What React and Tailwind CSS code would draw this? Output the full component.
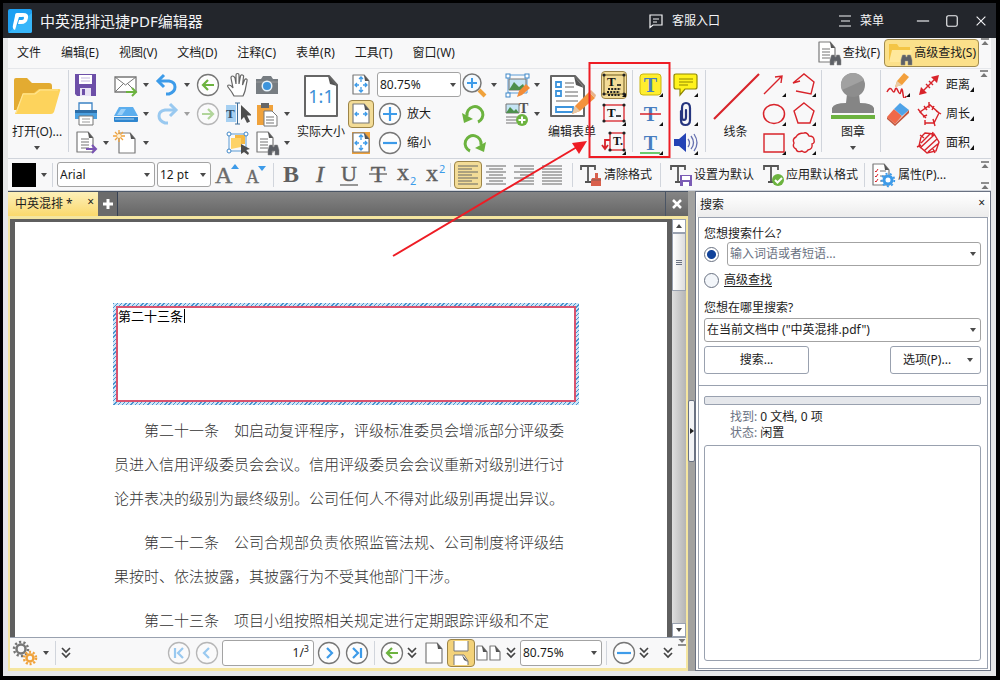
import React, { useState } from "react";
import clsx from "clsx";

const RED = "#d8232a";
const BLUE = "#3d9be9";
const GREEN = "#6cb33f";
const GRAY = "#6b6b6b";

/* ---------- helpers ---------- */

function Svg({ children, box = 26, className = "size-[26px]" }) {
  return (
    <svg viewBox={`0 0 ${box} ${box}`} className={clsx("shrink-0", className)} fill="none" aria-hidden="true">
      {children}
    </svg>
  );
}

function Caret({ className }) {
  return (
    <svg viewBox="0 0 8 4" className={clsx("h-1 w-2 shrink-0", className)} aria-hidden="true">
      <path d="M1 0h6L4 4z" fill="#4a4a4a" />
    </svg>
  );
}

function Corner() {
  return <path d="M25 21v4h-4z" fill="#111" />;
}

function Sep({ className }) {
  return <span className={clsx("w-px shrink-0 bg-gray-300", className)} />;
}

function Cell({ label, icon, caret, active, faded, text }) {
  return (
    <button type="button" aria-label={text ? undefined : label} className="flex h-[29px] shrink-0 items-center">
      <span
        className={clsx(
          "flex h-7 w-[26px] shrink-0 items-center justify-center",
          active && "rounded-sm border border-[#9c8448] bg-[#f3dc97]",
          faded && "opacity-50"
        )}
      >
        {icon}
      </span>
      {caret && (
        <span className={clsx("flex w-[14px] justify-center", faded && "opacity-50")}>
          <Caret />
        </span>
      )}
      {text && <span className="pl-1">{text}</span>}
    </button>
  );
}

function Select({ label, options, className, placeholder }) {
  return (
    <span className={clsx("relative flex items-center", className)}>
      <select
        aria-label={label}
        className={clsx(
          "size-full appearance-none rounded-[3px] border border-[#a3a3a3] bg-white pl-[2px] outline-none",
          placeholder && "text-gray-500"
        )}
      >
        {options.map((o) => (
          <option key={o}>{o}</option>
        ))}
      </select>
      <Caret className="pointer-events-none absolute right-1" />
    </span>
  );
}

/* up / down overflow marks at the end of a bar */
function Overflow({ down, className }) {
  return (
    <svg viewBox="0 0 8 7" className={clsx("h-[7px] w-2 shrink-0", down && "rotate-180", className)} aria-hidden="true">
      <path d="M0 1h8" stroke="#555" strokeWidth="1.3" />
      <path d="M4 3l3.5 4h-7z" fill="#777" />
    </svg>
  );
}

/* ---------- icons ---------- */

const Page = ({ x = 5, y = 2, w = 15, h = 20 }) => (
  <>
    <path
      d={`M${x} ${y}h${w - 5}l5 6v${h - 6}h-${w}z`}
      fill="#fff"
      stroke="#7a7a7a"
      strokeWidth="1.2"
      strokeLinejoin="round"
    />
    <path d={`M${x + w - 5} ${y}l5 6h-4z`} fill="#555" />
  </>
);

const Lines = ({ x = 8, y = 8, n = 4, w = 8, step = 3 }) =>
  Array.from({ length: n }, (_, i) => (
    <path key={i} d={`M${x} ${y + i * step}h${w}`} stroke="#8a8a8a" strokeWidth="1.2" />
  ));

const Binoculars = () => (
  <path
    d="M14 25v-5l1.500-5h3l.5 2h1l.5-2h3l1.500 5v5h-4v-4h-3v4z"
    fill="#5d6066"
    stroke="#888"
    strokeWidth=".5"
  />
);

const FolderIcon = () => (
  <svg viewBox="0 0 48 40" className="h-10 w-12" aria-hidden="true">
    <path d="M1 34V4q0-2 2-2h11l5 5h17q3 0 3 3v24z" fill="#e3ab31" />
    <path d="M2 38l8-21h11l5-4h20q2 0 1 2l-6 21q-1 2-3 2z" fill="#fdd35c" />
    <path d="M3 37l7-19h12l5-4h18" fill="none" stroke="#ffe592" strokeWidth="1.2" />
  </svg>
);

const SaveIcon = () => (
  <Svg>
    <path d="M2 2h21v22H4l-2-2z" fill="#6d4fa8" />
    <path d="M6 3h13v9H6z" fill="#fff" />
    <path d="M8 6h9M8 9h9" stroke="#c4b6df" />
    <path d="M7 16h11v8H7z" fill="#e8e2f4" />
    <path d="M9 17h3v6H9z" fill="#6d4fa8" />
  </Svg>
);

const PrintIcon = () => (
  <Svg>
    <path d="M6 2h13v8H6z" fill="#fff" stroke="#3b82c4" strokeWidth="1.300" />
    <path d="M2 9h22v9H2z" fill="#4ba0e0" />
    <path d="M2 9h22v3H2z" fill="#2d6ea8" />
    <path d="M6 15h14v9H6z" fill="#fff" stroke="#777" />
    <path d="M9 18h8M9 21h8" stroke="#999" />
  </Svg>
);

const ExportIcon = () => (
  <Svg>
    <Page x={4} w={16} />
    <Lines y={9} />
    <path d="M13 19h9M19 15l4 4-4 4" stroke="#7a54b4" strokeWidth="2" />
  </Svg>
);

const MailIcon = () => (
  <Svg>
    <path d="M2 5h21v15H2z" fill="#fff" stroke="#777" strokeWidth="1.300" />
    <path d="M2 5l10.500 8L23 5M2 20l8-8M23 20l-8-8" stroke="#777" />
    <path d="M13 20h9M19 16l4 4-4 4" stroke={GREEN} strokeWidth="2" />
  </Svg>
);

const ScanIcon = () => (
  <Svg>
    <path d="M6 6h14l5 9H1z" fill="#5caeee" />
    <path d="M8 8h5l-4 6H4z" fill="#9bd0f8" />
    <path d="M1 16h24v4q0 1-1 1H2q-1 0-1-1z" fill="#2f86cf" />
    <path d="M2 18h19" stroke="#a8d6f8" />
  </Svg>
);

const NewPageIcon = () => (
  <Svg>
    <Page x={6} y={3} w={16} h={20} />
    <path d="M6 0v12M0 6h12M2 2l8 8M10 2l-8 8" stroke="#f0a33c" strokeWidth="1.300" />
    <circle cx="6" cy="6" r="2" fill="#fff3d8" />
  </Svg>
);

const UndoIcon = ({ flip }) => (
  <Svg className={clsx("size-[26px]", flip && "-scale-x-100")}>
    <path d="M5 9h10q6 1 6 6t-6 7h-3" stroke={BLUE} strokeWidth="3" />
    <path d="M10 3L4 9l6 6" stroke={BLUE} strokeWidth="3" />
  </Svg>
);

const CircleIcon = ({ d, color = GREEN, className }) => (
  <Svg className={clsx("size-[26px]", className)}>
    <circle cx="13" cy="13" r="10.500" fill="#fdfdfd" stroke="#777" strokeWidth="1.300" />
    <path d={d} stroke={color} strokeWidth="2.200" />
  </Svg>
);

const ARROW_LEFT = "M19 13H8M13 8l-5 5 5 5";
const ARROW_RIGHT = "M7 13h11M13 8l5 5-5 5";
const PLUS = "M6 13h14M13 6v14";
const MINUS = "M6 13h14";

const HandIcon = () => (
  <Svg>
    <path
      d="M9 24q-2-4-6-9-1-2 1-2t4 3L6 6q0-2 1.500-2T10 6l1 6V3q0-1.500 1.500-1.500T14 3v9l1.500-8q.5-1.500 2-1t1 2L17.500 13l2-5q1-1.500 2-1t.5 2L20 19q-1 3-2 5z"
      fill="#fff"
      stroke="#666"
      strokeWidth="1.200"
    />
  </Svg>
);

const CursorIcon = ({ x = 14, y = 6 }) => (
  <path d={`M${x} ${y}v15l3-3 3 6 3-1.500-3-6h5z`} fill="#4d4d4d" />
);

const TextSelectIcon = () => (
  <Svg>
    <path d="M1 4h10v17H1z" fill="#a6d0f2" />
    <text x="1" y="17" fontSize="13" fontFamily="Liberation Serif" fontWeight="bold" fill="#2f4c66">T</text>
    <path d="M10 2h5M12.500 2v21M10 23h5" stroke="#3c6d99" />
    <CursorIcon x={16} y={4} />
  </Svg>
);

const SelectObjectIcon = () => (
  <Svg>
    <path d="M4 4h17v17H4z" stroke="#5a9bd5" />
    <path d="M10 5h10v9H10z" fill="#f5b942" />
    <path d="M6 8h10v9l-10 2z" fill="#fdd267" />
    {[[3, 3], [20, 3], [3, 20]].map(([x, y]) => (
      <circle key={`${x}-${y}`} cx={x + 1} cy={y + 1} r="2" fill="#fff" stroke="#3f87c8" />
    ))}
    <path d="M16 14v10l3-2 4 3 1-2-3-3 4-1z" fill="#4d4d4d" />
  </Svg>
);

const CameraIcon = () => (
  <Svg>
    <path d="M2 7h5l2-3h8l2 3h5v15H2z" fill="#777d82" />
    <path d="M2 10h22" stroke="#999" />
    <circle cx="13" cy="14" r="5.500" fill="#e8f3fb" />
    <circle cx="13" cy="14" r="4" fill="#3d94dc" />
  </Svg>
);

const PasteIcon = () => (
  <Svg>
    <path d="M3 4h16v20H3z" fill="#f0a23b" />
    <path d="M7 2h8v5H7z" fill="#666" />
    <path d="M10 10h8l5 5v10H10z" fill="#fff" stroke="#777" />
    <Lines x={12} y={16} n={3} />
  </Svg>
);

const FindPageIcon = () => (
  <Svg>
    <Page x={3} y={2} w={16} h={20} />
    <Lines x={6} y={9} />
    <Binoculars />
  </Svg>
);

const FitIcon = ({ d, frame }) => (
  <Svg>
    {frame && <path d="M4 2h18v22H4z" fill="#f0a23b" />}
    <Page x={5} y={3} w={16} h={19} />
    <path d={d} stroke={BLUE} strokeWidth="1.300" />
  </Svg>
);
const FIT_ALL = "M13 5v5M11 7l2-2 2 2M13 20v-5M11 18l2 2 2-2M7 13h4M9 11l-2 2 2 2M19 13h-4M17 11l2 2-2 2";
const FIT_WIDTH = "M7 13h4M9 11l-2 2 2 2M19 13h-4M17 11l2 2-2 2";

const ActualSizeIcon = () => (
  <svg viewBox="0 0 36 44" className="h-11 w-9" aria-hidden="true">
    <path d="M2 2h24l8 9v31H2z" fill="#fff" stroke="#666" strokeWidth="2" strokeLinejoin="round" />
    <path d="M25 2l9 10-7-2z" fill="#555" />
    <text x="18" y="29" textAnchor="middle" fontSize="18" fontFamily="Noto Sans" fill="#3d8fd6">1:1</text>
  </svg>
);

const ZoomInIcon = () => (
  <Svg>
    <path d="M18 18l6 6" stroke="#f0a23b" strokeWidth="4" />
    <circle cx="11" cy="11" r="9" fill="#f4faff" stroke="#777" strokeWidth="1.500" />
    <path d="M6 11h10M11 6v10" stroke={BLUE} strokeWidth="2" />
  </Svg>
);

const RotateIcon = ({ flip }) => (
  <Svg className={clsx("size-[26px]", flip && "-scale-x-100")}>
    <path d="M6 15A8 8 0 1 1 17 21" stroke={GREEN} strokeWidth="3" />
    <path d="M1 12l2 10 9-4z" fill={GREEN} />
  </Svg>
);

const ImageEditIcon = () => (
  <Svg>
    <path d="M4 3h19v18H4z" stroke="#5a9bd5" />
    <path d="M5 7h17v11H5z" fill="#c5e4f5" stroke="#777" />
    <path d="M5 18l5-8 5 5 4-3 3 6z" fill="#4d8f4c" />
    {[[3, 3], [22, 3], [3, 22]].map(([x, y]) => (
      <rect key={`${x}-${y}`} x={x - 1} y={y - 1} width="4" height="4" fill="#fff" stroke="#3f87c8" />
    ))}
    <path d="M13 25l2-6 7-7 4 4-8 7z" fill="#f28c38" />
  </Svg>
);

const AddContentIcon = () => (
  <Svg>
    <path d="M2 3h13v9H2z" fill="#c5e4f5" stroke="#777" />
    <path d="M2 12l4-6 4 4 2-2 3 4z" fill="#4d8f4c" />
    <text x="15" y="12" fontSize="14" fontFamily="Liberation Serif" fontWeight="bold" fill="#555">T</text>
    <Lines x={2} y={16} n={3} w={11} />
    <circle cx="18" cy="19" r="6" fill={GREEN} />
    <path d="M14.500 19h7M18 15.500v7" stroke="#fff" strokeWidth="2" />
  </Svg>
);

const FormIcon = () => (
  <svg viewBox="0 0 50 44" className="h-11 w-[50px] shrink-0" aria-hidden="true">
    <path d="M4 2h24l9 10v30H4z" fill="#fff" stroke="#666" strokeWidth="2" strokeLinejoin="round" />
    <path d="M27 2l10 12-8-3z" fill="#555" />
    <g fill="none" stroke="#3d94dc" strokeWidth="1.800">
      <path d="M9 8h5v5H9zM9 17h5v5H9zM9 33h17v5H9z" />
    </g>
    <path d="M18 9h9M18 13h9M18 18h13M18 22h13M9 27h22" stroke="#999" strokeWidth="1.500" />
    <path d="M25 40l3-8 14-14 6 6-15 13z" fill="#f3923c" />
    <path d="M42 18l2-2 5 5-1 3z" fill="#e8b48a" />
    <path d="M25 40l3-8 5 5z" fill="#e6c7a5" />
  </svg>
);

const Frame = ({ x, y, w, h, color }) => (
  <>
    <rect x={x} y={y} width={w} height={h} stroke={color} strokeWidth="1.300" />
    {[[x, y], [x + w, y], [x, y + h], [x + w, y + h]].map(([cx, cy]) => (
      <circle key={`${cx}-${cy}`} cx={cx} cy={cy} r="1.600" fill="#222" />
    ))}
  </>
);

const TypewriterIcon = () => (
  <Svg>
    <Frame x={3} y={3} w={20} h={19} color="#8f7a3b" />
    <text x="6" y="14" fontSize="13" fontFamily="Liberation Serif" fontWeight="bold" fill="#111">T</text>
    <path d="M16 13h4" stroke="#111" strokeWidth="1.500" />
    <path d="M7 17h13M6 20h13M7 23h12" stroke="#222" strokeWidth="1.800" strokeDasharray="2 1.200" />
    <Corner />
  </Svg>
);

const TextBoxIcon = () => (
  <Svg>
    <Frame x={3} y={4} w={20} h={16} color={RED} />
    <text x="6" y="16" fontSize="13" fontFamily="Liberation Serif" fontWeight="bold" fill="#111">T</text>
    <path d="M15 15h5" stroke="#111" strokeWidth="1.500" />
    <Corner />
  </Svg>
);

const CalloutIcon = () => (
  <Svg>
    <Frame x={9} y={3} w={14} h={17} color={RED} />
    <text x="12" y="15" fontSize="12" fontFamily="Liberation Serif" fontWeight="bold" fill="#111">T.</text>
    <path d="M9 10H4v8M1 15l3 4 3-4" stroke={RED} strokeWidth="1.800" />
    <Corner />
  </Svg>
);

const MarkIcon = ({ kind }) => (
  <Svg>
    {kind === "highlight" && <rect x="2" y="2" width="21" height="21" rx="3" fill="#ffee2e" stroke="#c9b60f" />}
    <text x="12.500" y="20" textAnchor="middle" fontSize="20" fontFamily="Liberation Serif" fontWeight="bold" fill="#477dc0">
      T
    </text>
    {kind === "strike" && <path d="M2 13h21" stroke={RED} strokeWidth="1.500" />}
    {kind === "underline" && <path d="M2 23h20" stroke="#3dbb3d" strokeWidth="1.500" />}
    <Corner />
  </Svg>
);

const NoteIcon = () => (
  <Svg>
    <path
      d="M3 2h19q2 0 2 2v11q0 2-2 2H12l-5 6v-6H3q-2 0-2-2V4q0-2 2-2z"
      fill="#fff21c"
      stroke="#8f8600"
      strokeWidth="1.200"
    />
    <path d="M6 7h14M6 10h14M6 13h9" stroke="#8f8600" />
    <Corner />
  </Svg>
);

const ClipIcon = () => (
  <Svg>
    <path
      d="M8 10v9q0 5 4.500 5t4.500-5V7q0-5-4-5T9 7v9q0 3 2 3t2-3V9"
      stroke="#25357f"
      strokeWidth="2.200"
      strokeLinecap="round"
    />
    <Corner />
  </Svg>
);

const SoundIcon = () => (
  <Svg>
    <path d="M1 9h5l7-6v19l-7-6H1z" fill="#2443b5" />
    <path d="M15 9q3 4 0 8M18 6q5 7 0 13M21 4q6 9 0 17" stroke="#6671b0" strokeWidth="1.300" />
    <Corner />
  </Svg>
);

const Shape = ({ d, children, corner = true }) => (
  <Svg>
    {d && <path d={d} stroke={RED} strokeWidth="1.400" />}
    {children}
    {corner && <Corner />}
  </Svg>
);

const PencilIcon = () => (
  <Svg>
    <path d="M10 15l2-6 7-8 5 4-7 8z" fill="#f3a03c" />
    <path d="M10 15l2-6 5 4z" fill="#e9cba8" />
    <path d="M2 20q3-6 5-2t3 0 3 1 3 0 2 3 3 2" stroke={RED} strokeWidth="1.500" />
    <Corner />
  </Svg>
);

const EraserIcon = () => (
  <Svg>
    <path d="M2 16l7-8 8 7-7 8z" fill="#f0694a" />
    <path d="M9 8l6-6 9 7-7 6z" fill="#4fa3e8" />
    <path d="M2 16v2l8 7v-2zM10 23l14-14v3L10 25z" fill="#c2573f" />
  </Svg>
);

const StampIcon = () => (
  <svg viewBox="0 0 48 48" className="size-12" aria-hidden="true">
    <path d="M18 22h12l1 9q12 0 14 5v5H3v-5q2-5 14-5z" fill="#858585" />
    <circle cx="24" cy="13" r="12" fill="#8d8d8d" />
    <path d="M13 18A12 12 0 0 1 35 8z" fill="#a1a1a1" />
    <path d="M2 43h44v4H2z" fill={GREEN} />
  </svg>
);

const Distance = () => (
  <Svg>
    <path d="M5 21L21 5M10 12l4 4M13 9l4 4" stroke={RED} strokeWidth="1.400" />
    <path d="M23 3l-2 8-6-6zM3 23l2-8 6 6z" fill={RED} />
  </Svg>
);
const Perimeter = () => (
  <Shape corner={false} d="M9 22h9l5-10-9-8-10 7 6 6M9 19v5M17 18l2 7M20 10l5 3M13 1v6M2 8l4 5M7 16l4-2M8 5l3 4M18 5l-2 4" />
);
const Area = () => (
  <>
    <Shape corner={false} d="M9 3l9 1 5 8-3 9-9 2-8-7 2-9zM5 13l9-9M4 18L18 5M8 21L21 9M12 22L23 13M4 5l4 3M1 17l4-2M17 2l-1 4M19 23l-2-4" />
  </>
);

const FormatT = ({ kind }) => (
  <svg viewBox="0 0 24 24" className="size-6 shrink-0" fill="none" aria-hidden="true">
    <path d="M2 7V3h14v4M9 3v16M6 19h6" stroke="#555" strokeWidth="1.800" />
    {kind === "clear" && <path d="M16 10h3v5h3v8H12v-5l1-3h3z" fill="#d9604c" />}
    {kind === "clear" && <path d="M12 17h10" stroke="#8c5a50" />}
    {kind === "save" && (
      <>
        <path d="M11 12h12v11H11z" fill="#7b5cb5" />
        <path d="M13 13h8v4h-8zM14 19h6v4h-6z" fill="#fff" />
      </>
    )}
    {kind === "apply" && (
      <>
        <circle cx="16" cy="17" r="6" fill={GREEN} />
        <path d="M13 17l2.500 2.500L20 15" stroke="#fff" strokeWidth="2" />
      </>
    )}
  </svg>
);

const PropsIcon = () => (
  <Svg>
    <Page x={2} y={2} w={16} h={21} />
    <path d="M4 9l1 1 2-3M4 14l1 1 2-3M4 19l1 1 2-3" stroke={RED} />
    <Lines x={9} y={9} n={3} w={6} step={5} />
    <circle cx="17" cy="18" r="4" stroke={BLUE} strokeWidth="3" fill="#fff" />
    <circle cx="17" cy="18" r="6.300" stroke={BLUE} strokeWidth="1.800" strokeDasharray="2 2.400" />
  </Svg>
);

const GearsIcon = () => (
  <Svg>
    <circle cx="9" cy="9" r="4.500" stroke="#777" strokeWidth="2.500" />
    <circle cx="9" cy="9" r="7" stroke="#777" strokeWidth="2.500" strokeDasharray="2.200 2.200" />
    <circle cx="18" cy="18" r="3.500" stroke="#f0a23b" strokeWidth="2.500" />
    <circle cx="18" cy="18" r="6" stroke="#f0a23b" strokeWidth="2.500" strokeDasharray="2 1.800" />
  </Svg>
);

const Chevrons = () => (
  <svg viewBox="0 0 10 12" className="h-3 w-[10px] shrink-0" fill="none" aria-hidden="true">
    <path d="M1 1l4 4 4-4M1 6l4 4 4-4" stroke="#444" strokeWidth="1.700" />
  </svg>
);

const AlignIcon = ({ kind }) => {
  const short = { left: "M2 6h14M2 12h14M2 18h14", center: "M5 6h14M5 12h14M5 18h14", right: "M8 6h14M8 12h14M8 18h14", full: "M2 6h20M2 12h20M2 18h20" };
  return (
    <svg viewBox="0 0 24 24" className="size-6 shrink-0" aria-hidden="true">
      <path d={`M2 3h20M2 9h20M2 15h20M2 21h20${short[kind]}`} stroke="#666" strokeWidth="1.200" />
    </svg>
  );
};

/* ---------- bars ---------- */

const menus = ["文件", "编辑(E)", "视图(V)", "文档(D)", "注释(C)", "表单(R)", "工具(T)", "窗口(W)"];

function TitleBar() {
  return (
    <header className="flex h-[35px] shrink-0 items-center bg-[#23262c] pr-2 pl-[5px] text-gray-100">
      <svg viewBox="0 0 24 24" className="size-6" aria-hidden="true">
        <rect width="24" height="24" rx="2" fill="#1ea0f2" />
        <path d="M0 24L24 4v18q0 2-2 2z" fill="#37b6fa" />
        <path d="M9 4h6q6 0 5 5-1 6-7 6h-3l1-4h3q2 0 2-2t-2-1h-3L7 21q-3-1-2-5L7 7q0-3 2-3z" fill="#fff" />
      </svg>
      <h1 className="pl-2 text-[15px]">中英混排迅捷PDF编辑器</h1>
      <button type="button" className="ml-auto flex items-center gap-2">
        <svg viewBox="0 0 16 16" className="size-4" fill="none" stroke="currentColor" aria-hidden="true">
          <path d="M2 2h12v10H5l-3 2.500zM5 6h6M5 9h4" strokeWidth="1.200" />
        </svg>
        客服入口
      </button>
      <button type="button" className="ml-[118px] flex items-center gap-2">
        <svg viewBox="0 0 14 14" className="size-[14px]" stroke="currentColor" aria-hidden="true">
          <path d="M1 2h12M3 7h9M1 12h12" strokeWidth="1.200" />
        </svg>
        菜单
      </button>
      <div className="ml-8 flex gap-[15px]">
        {[
          ["最小化", "M1 8h14"],
          ["最大化", "M4 2h8q2 0 2 2v8q0 2-2 2H4q-2 0-2-2V4q0-2 2-2z"],
          ["关闭", "M3 3l10 10M13 3L3 13"],
        ].map(([name, d]) => (
          <button key={name} type="button" aria-label={name}>
            <svg viewBox="0 0 16 16" className="size-[14px]" fill="none" stroke="currentColor" aria-hidden="true">
              <path d={d} strokeWidth="1.300" />
            </svg>
          </button>
        ))}
      </div>
    </header>
  );
}

function MenuBar() {
  return (
    <nav className="flex h-[30px] shrink-0 items-center bg-[#f8f8f9]">
      <div className="flex gap-5 pl-[9px]">
        {menus.map((m) => (
          <button key={m} type="button" className="whitespace-nowrap">
            {m}
          </button>
        ))}
      </div>
      <button type="button" className="ml-auto flex items-center gap-px">
        <FindPageIcon />
        查找(F)
      </button>
      <button
        type="button"
        className="ml-1 flex h-7 items-center gap-px rounded-sm border border-[#a08b50] bg-[#fbe08a] px-[2px]"
      >
        <Svg>
          <path d="M2 4h8l2 3h11v15H2z" fill="#f4c545" />
          <path d="M2 22L5 10h20l-2 12z" fill="#ffe89b" />
          <Binoculars />
        </Svg>
        高级查找(S)
      </button>
      <Overflow className="mx-[2px] self-start" />
    </nav>
  );
}

function BigButton({ icon, label, caret, className }) {
  return (
    <button type="button" className={clsx("flex shrink-0 flex-col items-center whitespace-nowrap", className)}>
      <span className="flex h-[52px] items-center">{icon}</span>
      <span className="leading-5">{label}</span>
      {caret && <Caret className="mt-1" />}
    </button>
  );
}

function Ribbon() {
  return (
    <div className="flex h-[90px] shrink-0 border-t border-gray-200 bg-[#f8f8f9] pt-px pr-px">
      <BigButton className="w-[58px]" icon={<FolderIcon />} label="打开(O)..." caret />
      <Sep className="mr-1 ml-[2px] h-[82px]" />
      <div className="w-10">
        <Cell label="保存" icon={<SaveIcon />} />
        <Cell label="打印" icon={<PrintIcon />} />
        <Cell label="导出" icon={<ExportIcon />} caret />
      </div>
      <div className="w-[41px]">
        <Cell label="邮件" icon={<MailIcon />} caret />
        <Cell label="扫描" icon={<ScanIcon />} caret />
        <Cell label="新建" icon={<NewPageIcon />} caret />
      </div>
      <div className="w-[41px]">
        <Cell label="撤销" icon={<UndoIcon />} caret />
        <Cell label="重做" icon={<UndoIcon flip />} caret faded />
      </div>
      <div className="w-[30px]">
        <Cell label="后退" icon={<CircleIcon d={ARROW_LEFT} />} />
        <Cell label="前进" icon={<CircleIcon d={ARROW_RIGHT} />} faded />
      </div>
      <div className="w-[29px]">
        <Cell label="手形" icon={<HandIcon />} />
        <Cell label="选择文本" icon={<TextSelectIcon />} />
        <Cell label="选择对象" icon={<SelectObjectIcon />} />
      </div>
      <div className="w-[42px]">
        <Cell label="快照" icon={<CameraIcon />} />
        <Cell label="粘贴" icon={<PasteIcon />} caret />
        <Cell label="页面查找" icon={<FindPageIcon />} caret />
      </div>
      <BigButton className="w-[50px]" icon={<ActualSizeIcon />} label="实际大小" />
      <div className="ml-[2px] w-[29px]">
        <Cell label="适合页面" icon={<FitIcon d={FIT_ALL} />} />
        <Cell label="适合宽度" icon={<FitIcon d={FIT_WIDTH} />} active />
        <Cell label="适合可见" icon={<FitIcon d={FIT_ALL} frame />} />
      </div>
      <div className="w-[84px]">
        <Select label="缩放比例" options={["80.75%", "100%"]} className="my-[2px] h-[25px]" />
        <Cell text="放大" icon={<CircleIcon d={PLUS} color={BLUE} />} />
        <Cell text="缩小" icon={<CircleIcon d={MINUS} color={BLUE} />} />
      </div>
      <div className="w-[43px]">
        <Cell label="放大镜" icon={<ZoomInIcon />} caret />
        <Cell label="逆时针旋转" icon={<RotateIcon />} />
        <Cell label="顺时针旋转" icon={<RotateIcon flip />} />
      </div>
      <div className="w-[43px]">
        <Cell label="编辑内容" icon={<ImageEditIcon />} caret />
        <Cell label="添加内容" icon={<AddContentIcon />} caret />
      </div>
      <BigButton className="w-[50px]" icon={<FormIcon />} label="编辑表单" />
      <div className="ml-1 w-[31px]">
        <Cell label="打字机" icon={<TypewriterIcon />} active />
        <Cell label="文本框" icon={<TextBoxIcon />} />
        <Cell label="标注" icon={<CalloutIcon />} />
      </div>
      <Sep className="mr-[5px] h-[82px]" />
      <div className="w-[35px]">
        <Cell label="高亮" icon={<MarkIcon kind="highlight" />} />
        <Cell label="删除线" icon={<MarkIcon kind="strike" />} />
        <Cell label="下划线" icon={<MarkIcon kind="underline" />} />
      </div>
      <div className="w-8">
        <Cell label="便签" icon={<NoteIcon />} />
        <Cell label="附件" icon={<ClipIcon />} />
        <Cell label="声音" icon={<SoundIcon />} />
      </div>
      <Sep className="mr-1 h-[82px]" />
      <BigButton
        className="w-[51px]"
        icon={
          <svg viewBox="0 0 48 48" className="size-12" aria-hidden="true">
            <path d="M2 47L47 2" stroke={RED} strokeWidth="2.200" />
          </svg>
        }
        label="线条"
      />
      <div className="w-[30px]">
        <Cell label="箭头" icon={<Shape d="M3 22L21 4M14 5l7-1-1 7" />} />
        <Cell label="椭圆" icon={<Shape><ellipse cx="13" cy="13" rx="10.500" ry="9.500" stroke={RED} strokeWidth="1.500" /></Shape>} />
        <Cell label="矩形" icon={<Shape d="M3 4h20v18H3z" />} />
      </div>
      <div className="w-[30px]">
        <Cell label="折线" icon={<Shape d="M9 9l-7 2L13 2l10 8-3 12-15-3" />} />
        <Cell label="多边形" icon={<Shape d="M13 2l10 8-4 12H7L3 10z" />} />
        <Cell label="云朵" icon={<Shape d="M13 3q3-1 5 3 5 0 5 4 1 3-2 4 1 5-4 6-3 4-6 1-5 2-6-2-4-2-2-6-2-4 2-6 2-4 8-4z" />} />
      </div>
      <Sep className="mr-1 h-[82px]" />
      <BigButton className="w-[54px]" icon={<StampIcon />} label="图章" caret />
      <Sep className="mr-1 h-[82px]" />
      <div className="w-[31px]">
        <Cell label="铅笔" icon={<PencilIcon />} />
        <Cell label="橡皮" icon={<EraserIcon />} />
      </div>
      <div>
        <Cell icon={<Distance />} text="距离" />
        <Cell icon={<Perimeter />} text="周长" />
        <Cell icon={<Area />} text="面积" />
      </div>
      <div className="flex flex-col">
        {[1, 2, 3].map((n) => (
          <svg key={n} viewBox="0 0 4 29" className="h-[29px] w-1" aria-hidden="true">
            <path d="M4 17v5H0z" fill="#111" />
          </svg>
        ))}
      </div>
      <Overflow className="mr-[2px] ml-auto" />
    </div>
  );
}

function FontButton({ label, children }) {
  return (
    <button type="button" aria-label={label} className="flex w-[29px] shrink-0 justify-center text-[#555]">
      <svg viewBox="0 0 26 26" className="size-[26px] overflow-visible" fill="none" fontFamily="Liberation Serif" aria-hidden="true">
        {children}
      </svg>
    </button>
  );
}

function FormatBar() {
  return (
    <div className="flex h-[33px] shrink-0 items-center border-y border-gray-300 bg-[#f8f8f9] whitespace-nowrap">
      <button type="button" aria-label="颜色" className="flex items-center gap-1 pl-1">
        <span className="size-6 bg-black" />
        <Caret />
      </button>
      <Sep className="mx-1 h-6" />
      <Select label="字体" options={["Arial", "Times"]} className="h-[25px] w-[98px]" />
      <Select label="字号" options={["12 pt", "14 pt"]} className="ml-[2px] h-[25px] w-[54px]" />
      <FontButton label="增大字号">
        <text x="2" y="21" fontSize="24" fill={GRAY} stroke={GRAY} strokeWidth=".4">A</text>
        <path d="M18 7l4-5 4 5z" fill={BLUE} />
      </FontButton>
      <FontButton label="减小字号">
        <text x="4" y="21" fontSize="18" fill={GRAY} stroke={GRAY} strokeWidth=".4">A</text>
        <path d="M16 4l4 5 4-5z" fill={BLUE} />
      </FontButton>
      <Sep className="ml-1 mr-[2px] h-6" />
      <FontButton label="粗体">
        <text x="13" y="20" textAnchor="middle" fontSize="24" fontWeight="bold" fill="#606060">B</text>
      </FontButton>
      <FontButton label="斜体">
        <text x="13" y="20" textAnchor="middle" fontSize="24" fontStyle="italic" fill="#606060" stroke="#606060" strokeWidth=".4">I</text>
      </FontButton>
      <FontButton label="下划线文字">
        <text x="13" y="19" textAnchor="middle" fontSize="22" fill="#606060" stroke="#606060" strokeWidth=".4">U</text>
        <path d="M4 23h18" stroke="#606060" strokeWidth="1.300" />
      </FontButton>
      <FontButton label="删除线文字">
        <text x="13" y="20" textAnchor="middle" fontSize="24" fill="#606060" stroke="#606060" strokeWidth=".4">T</text>
        <path d="M4 12h18" stroke="#606060" strokeWidth="1.300" />
      </FontButton>
      <FontButton label="下标">
        <text x="3" y="18" fontSize="24" fill="#606060" stroke="#606060" strokeWidth=".4">x</text>
        <text x="16" y="23" fontSize="11" fontFamily="Noto Sans" fill={BLUE}>2</text>
      </FontButton>
      <FontButton label="上标">
        <text x="3" y="19" fontSize="24" fill="#606060" stroke="#606060" strokeWidth=".4">x</text>
        <text x="16" y="11" fontSize="11" fontFamily="Noto Sans" fill={BLUE}>2</text>
      </FontButton>
      <Sep className="mr-[3px] h-6" />
      {["left", "center", "right", "full"].map((kind) => (
        <button
          key={kind}
          type="button"
          aria-label={kind}
          className={clsx(
            "flex size-7 shrink-0 items-center justify-center",
            kind === "left" && "rounded-sm border border-[#9c8448] bg-[#f3dc97]"
          )}
        >
          <AlignIcon kind={kind} />
        </button>
      ))}
      <Sep className="mx-[6px] h-6" />
      <button type="button" className="flex items-center gap-px">
        <FormatT kind="clear" />
        清除格式
      </button>
      <Sep className="mx-2 h-6" />
      <button type="button" className="flex items-center gap-px">
        <FormatT kind="save" />
        设置为默认
      </button>
      <button type="button" className="ml-2 flex items-center">
        <FormatT kind="apply" />
        应用默认格式
      </button>
      <Sep className="mx-[6px] h-6" />
      <button type="button" className="flex items-center gap-px">
        <PropsIcon />
        属性(P)...
      </button>
      <div className="mr-[2px] ml-auto flex flex-col gap-[14px]">
        <Overflow />
        <Overflow />
      </div>
    </div>
  );
}

/* ---------- document ---------- */

const paragraphs = [
  ["　　第二十一条　如启动复评程序，评级标准委员会增派部分评级委", "员进入信用评级委员会会议。信用评级委员会会议重新对级别进行讨", "论并表决的级别为最终级别。公司任何人不得对此级别再提出异议。"],
  ["　　第二十二条　公司合规部负责依照监管法规、公司制度将评级结", "果按时、依法披露，其披露行为不受其他部门干涉。"],
  ["　　第二十三条　项目小组按照相关规定进行定期跟踪评级和不定"],
];

function Editor() {
  const [value, setValue] = useState("第二十三条");
  return (
    <div className="relative mr-[88px] h-[102px] bg-[repeating-linear-gradient(135deg,#4a94cf_0px,#4a94cf_1px,#cfe6f8_1px,#cfe6f8_3px)] p-[3px]">
      <textarea
        aria-label="文本框内容"
        value={value}
        onChange={(e) => setValue(e.target.value)}
        className="block size-full resize-none border-2 border-[#d9536f] bg-white text-[13px] leading-4 text-black outline-none"
      />
      {/* insertion point */}
      <span className="absolute top-[6px] left-[71px] h-[14px] w-px bg-black" />
    </div>
  );
}

function DocumentView() {
  return (
    <main className="flex min-w-0 flex-1 flex-col bg-[#f5e6a0] pb-[3px]">
      <div className="flex h-[25px] shrink-0 items-stretch border-t border-gray-600 bg-gradient-to-b from-[#858585] to-[#666666]">
        <div className="flex w-[90px] items-center bg-gradient-to-b from-[#fdf0b8] to-[#fbd96b] pl-[7px]">
          中英混排 *
          <button type="button" aria-label="关闭标签" className="mr-1 mb-1 ml-auto leading-none">
            ×
          </button>
        </div>
        <button type="button" aria-label="新标签" className="flex w-5 items-center justify-center border-r border-gray-700 bg-[#6b6b6b]">
          <svg viewBox="0 0 10 10" className="size-[10px]" aria-hidden="true">
            <path d="M5 0v10M0 5h10" stroke="#fff" strokeWidth="3" />
          </svg>
        </button>
        <button type="button" aria-label="关闭文档" className="mr-px ml-auto flex w-[22px] items-center justify-center border-l border-gray-600">
          <svg viewBox="0 0 10 10" className="size-[10px]" aria-hidden="true">
            <path d="M1 1l8 8M9 1L1 9" stroke="#fff" strokeWidth="2.500" />
          </svg>
        </button>
      </div>

      <div className="mx-[2px] mt-[3px] flex min-h-0 flex-1 bg-[#5f5f5f]">
        <div className="mt-[3px] ml-[5px] min-w-0 flex-1 overflow-hidden bg-white pt-[81px] pl-[98px]">
          <Editor />
          <div className="flex flex-col gap-[10px] pt-2 pl-px text-[15px] leading-[34px] font-light text-[#333]">
            {paragraphs.map((lines) => (
              <p key={lines[0]}>
                {lines.map((l) => (
                  <span key={l} className="block whitespace-pre">
                    {l}
                  </span>
                ))}
              </p>
            ))}
          </div>
        </div>
        <div className="ml-[5px] flex w-[14px] shrink-0 flex-col bg-gradient-to-r from-[#dedede] to-[#b5b5b5]">
          <button type="button" aria-label="向上滚动" className="flex h-[14px] items-center justify-center border border-gray-400 bg-white">
            <Caret className="rotate-180" />
          </button>
          <div className="flex h-[58px] flex-col items-center justify-center gap-px border border-gray-400 bg-gradient-to-r from-white to-[#dcdcdc]">
            <span className="h-px w-[6px] bg-gray-500" />
            <span className="h-px w-[6px] bg-gray-500" />
            <span className="h-px w-[6px] bg-gray-500" />
          </div>
          <button type="button" aria-label="向下滚动" className="mt-auto flex h-[14px] items-center justify-center border border-gray-400 bg-white">
            <Caret />
          </button>
        </div>
      </div>

      <StatusBar />
    </main>
  );
}

function StatusBar() {
  return (
    <footer className="mx-[2px] flex h-[31px] shrink-0 items-center border-t border-gray-400 bg-[#f8f8f9]">
      <button type="button" aria-label="选项" className="flex items-center gap-1 pl-[2px]">
        <GearsIcon />
        <Caret />
      </button>
      <Sep className="mr-[5px] ml-[5px] h-6" />
      <Chevrons />
      <div className="ml-auto flex shrink-0 items-center">
        <button type="button" aria-label="首页" className="opacity-50">
          <CircleIcon d="M9 8v10M17 8l-5 5 5 5" color={BLUE} />
        </button>
        <button type="button" aria-label="上一页" className="ml-[2px] opacity-50">
          <CircleIcon d="M15 8l-5 5 5 5" color={BLUE} />
        </button>
        <label className="mx-[2px] flex h-[26px] w-[92px] items-center rounded-[3px] border border-[#a3a3a3] bg-white pr-1">
          <input aria-label="页码" defaultValue="1" className="w-full min-w-0 text-right outline-none" />
          <span>/</span>
          <sup className="text-[9px]">3</sup>
        </label>
        <button type="button" aria-label="下一页">
          <CircleIcon d="M11 8l5 5-5 5" color={BLUE} />
        </button>
        <button type="button" aria-label="末页" className="ml-[2px]">
          <CircleIcon d="M9 8l5 5-5 5M17 8v10" color={BLUE} />
        </button>
        <Sep className="mx-1 h-6" />
        <button type="button" aria-label="返回" className="flex items-center gap-[2px]">
          <CircleIcon d={ARROW_LEFT} />
          <Chevrons />
        </button>
        <button type="button" aria-label="单页" className="ml-1">
          <Svg>
            <Page x={5} y={3} w={16} h={20} />
          </Svg>
        </button>
        <button type="button" aria-label="连续" className="flex size-7 items-center justify-center rounded-sm border border-[#9c8448] bg-[#f3d27a]">
          <svg viewBox="0 0 22 24" className="h-6 w-[22px]" aria-hidden="true">
            <path d="M4 0v10h14V0M4 24V14h10l4 6v4" fill="#fff" stroke="#777" />
            <path d="M12 14l6 7-4-2z" fill="#555" />
          </svg>
        </button>
        <button type="button" aria-label="双页" className="ml-px flex items-center gap-1">
          <svg viewBox="0 0 26 20" className="h-5 w-[26px]" aria-hidden="true">
            <Page x={1} y={3} w={10} h={14} />
            <Page x={14} y={3} w={10} h={14} />
          </svg>
          <Chevrons />
        </button>
        <Select label="页面缩放" options={["80.75%", "100%"]} className="ml-1 h-[26px] w-[82px]" />
        <Sep className="mx-1 h-6" />
        <button type="button" aria-label="缩小页面">
          <CircleIcon d={MINUS} color={BLUE} />
        </button>
        <span className="ml-[2px] flex items-center gap-[14px]">
          <Chevrons />
          <Chevrons />
        </span>
        <Overflow down className="ml-[5px] self-start" />
      </div>
    </footer>
  );
}

/* ---------- search ---------- */

function SearchPanel() {
  const [mode, setMode] = useState("simple");
  const radio =
    "size-[15px] shrink-0 appearance-none rounded-full border border-gray-500 bg-[#f3f6fa] checked:bg-[radial-gradient(circle,#12439a_0px,#12439a_4px,#ffffff_5px)]";

  return (
    <aside className="flex w-[296px] shrink-0 flex-col border border-gray-500 bg-white p-px">
      <header className="flex h-6 shrink-0 items-center justify-between bg-gradient-to-b from-white to-[#ececec] pr-1 pl-[3px]">
        <h2>搜索</h2>
        <button type="button" aria-label="关闭搜索" className="pb-1 leading-none">
          ×
        </button>
      </header>
      <div className="mx-px flex min-h-0 flex-1 flex-col border border-gray-400 pt-[6px]">
        <div className="pr-[6px] pl-[5px]">
          <p className="h-[18px] leading-5">您想搜索什么?</p>
          <div className="flex items-center gap-2">
            <input type="radio" name="mode" aria-label="简单查找" checked={mode === "simple"} onChange={() => setMode("simple")} className={radio} />
            <Select label="搜索内容" options={["输入词语或者短语..."]} placeholder className="h-6 flex-1" />
          </div>
          <label className="flex h-7 items-center gap-[5px]">
            <input type="radio" name="mode" checked={mode === "advanced"} onChange={() => setMode("advanced")} className={radio} />
            <span className="underline underline-offset-2">高级查找</span>
          </label>
          <p className="mt-1 h-5 leading-5">您想在哪里搜索?</p>
          <Select label="搜索范围" options={['在当前文档中 ("中英混排.pdf")']} className="h-6" />
          <div className="mt-1 flex justify-between">
            <button type="button" className="h-7 w-[105px] rounded-[3px] border border-gray-400">
              搜索...
            </button>
            <button type="button" className="flex h-7 w-[91px] items-center justify-between rounded-[3px] border border-gray-400 pr-[6px] pl-3">
              选项(P)...
              <Caret />
            </button>
          </div>
        </div>
        <hr className="mt-[11px] border-gray-400" />
        <div className="flex min-h-0 flex-1 flex-col pt-[10px] pr-[6px] pb-[7px] pl-[5px]">
          <div role="progressbar" aria-label="搜索进度" className="h-[9px] shrink-0 rounded-[2px] border border-gray-400 bg-gray-200" />
          <div className="py-1 pl-[26px] leading-4">
            <p>
              <span className="text-gray-500">找到:</span> 0 文档, 0 项
            </p>
            <p>
              <span className="text-gray-500">状态:</span> 闲置
            </p>
          </div>
          <div className="flex-1 rounded-[3px] border border-gray-400" />
        </div>
      </div>
    </aside>
  );
}

/* red frame and pointer drawn over the toolbar */
function Annotation() {
  return (
    <svg className="pointer-events-none absolute top-0 left-0 h-[260px] w-[700px]" viewBox="0 0 700 260" fill="none" aria-hidden="true">
      <rect x="589.500" y="63" width="80" height="94" stroke="#ee1c24" strokeWidth="2" />
      <path d="M393 256L577 147" stroke="#ee1c24" strokeWidth="2" />
      <path d="M587 141l-8 13-7-11z" fill="#ee1c24" />
    </svg>
  );
}

export default function App() {
  return (
    <div className="relative flex h-screen min-h-[480px] flex-col overflow-hidden bg-black pt-[3px] pr-1 pb-1 pl-[3px] font-['Noto_Sans','Noto_Sans_CJK_SC',sans-serif] text-xs text-[#1c1c1c]">
      <TitleBar />
      <div className="flex min-h-0 flex-1 flex-col bg-[#e6e7e8] pr-[5px] pb-[5px] pl-[5px]">
        <MenuBar />
        <Ribbon />
        <FormatBar />
        <div className="flex min-h-0 flex-1">
          <DocumentView />
          <div className="flex w-[7px] shrink-0 items-center bg-[#a2a2a0]">
            <button type="button" aria-label="折叠面板" className="flex h-[62px] w-full items-center justify-center rounded-[2px] border border-gray-500 bg-gray-100">
              <svg viewBox="0 0 4 6" className="h-[6px] w-1" aria-hidden="true">
                <path d="M0 0v6l4-3z" fill="#222" />
              </svg>
            </button>
          </div>
          <SearchPanel />
        </div>
      </div>
      <Annotation />
    </div>
  );
}
